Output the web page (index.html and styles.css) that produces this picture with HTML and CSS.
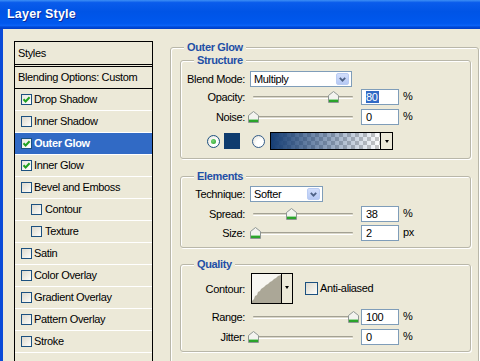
FILE: index.html
```html
<!DOCTYPE html>
<html>
<head>
<meta charset="utf-8">
<title>Layer Style</title>
<link rel="stylesheet" href="styles.css">
</head>
<body>
<div class="window">
  <div class="titlebar"><span class="title">Layer Style</span></div>
  <div class="frame">
    <div class="stylelist">
      <div class="list-head">Styles</div>
      <div class="list-blend">Blending Options: Custom</div>
      <div class="item"><span class="cb on"><svg width="9" height="9" viewBox="0 0 9 9"><path d="M1.5 4.3 L3.6 6.5 L7.6 2.2" fill="none" stroke="#21A121" stroke-width="2"/></svg></span><span class="txt">Drop Shadow</span></div>
      <div class="item"><span class="cb"></span><span class="txt">Inner Shadow</span></div>
      <div class="item selected"><span class="cb on"><svg width="9" height="9" viewBox="0 0 9 9"><path d="M1.5 4.3 L3.6 6.5 L7.6 2.2" fill="none" stroke="#21A121" stroke-width="2"/></svg></span><span class="txt">Outer Glow</span></div>
      <div class="item"><span class="cb on"><svg width="9" height="9" viewBox="0 0 9 9"><path d="M1.5 4.3 L3.6 6.5 L7.6 2.2" fill="none" stroke="#21A121" stroke-width="2"/></svg></span><span class="txt">Inner Glow</span></div>
      <div class="item"><span class="cb"></span><span class="txt">Bevel and Emboss</span></div>
      <div class="item sub"><span class="cb"></span><span class="txt">Contour</span></div>
      <div class="item sub"><span class="cb"></span><span class="txt">Texture</span></div>
      <div class="item"><span class="cb"></span><span class="txt">Satin</span></div>
      <div class="item"><span class="cb"></span><span class="txt">Color Overlay</span></div>
      <div class="item"><span class="cb"></span><span class="txt">Gradient Overlay</span></div>
      <div class="item"><span class="cb"></span><span class="txt">Pattern Overlay</span></div>
      <div class="item"><span class="cb"></span><span class="txt">Stroke</span></div>
    </div>

    <fieldset class="group outer">
      <legend>Outer Glow</legend>
      <div class="outer-body">

        <fieldset class="group structure">
          <legend>Structure</legend>
          <div class="rows">
            <div class="row r-blend">
              <span class="lbl">Blend Mode:</span>
              <span class="select blend"><span>Multiply</span><span class="drop"><svg width="7" height="5" viewBox="0 0 7 5"><path d="M0.8 0.8 L3.5 3.6 L6.2 0.8" fill="none" stroke="#4D6185" stroke-width="1.8"/></svg></span></span>
            </div>
            <div class="row r-opacity">
              <span class="lbl">Opacity:</span>
              <span class="slider"><span class="track"></span><span class="thumb" style="left:78px"><svg width="11" height="12" viewBox="0 0 11 12"><path d="M0.5 4.5 L5.5 0.5 L10.5 4.5 V11.5 H0.5 Z" fill="#F3F3EF" stroke="#8E9693"/><rect x="1" y="9" width="9" height="2" fill="#2BA42B"/><rect x="1" y="8" width="9" height="1" fill="#9ED79E"/></svg></span></span>
              <span class="num"><span class="sel">80</span></span><span class="unit">%</span>
            </div>
            <div class="row r-noise">
              <span class="lbl">Noise:</span>
              <span class="slider"><span class="track"></span><span class="thumb" style="left:-2px"><svg width="11" height="12" viewBox="0 0 11 12"><path d="M0.5 4.5 L5.5 0.5 L10.5 4.5 V11.5 H0.5 Z" fill="#F3F3EF" stroke="#8E9693"/><rect x="1" y="9" width="9" height="2" fill="#2BA42B"/><rect x="1" y="8" width="9" height="1" fill="#9ED79E"/></svg></span></span>
              <span class="num">0</span><span class="unit">%</span>
            </div>
            <div class="row r-color">
              <span class="radio on"><span class="dot"></span></span>
              <span class="swatch"></span>
              <span class="radio off"></span>
              <span class="gradient"><span class="grad-fill"></span><span class="grad-drop"><span class="tri"></span></span></span>
            </div>
          </div>
        </fieldset>

        <fieldset class="group elements">
          <legend>Elements</legend>
          <div class="rows">
            <div class="row r-tech">
              <span class="lbl">Technique:</span>
              <span class="select tech"><span>Softer</span><span class="drop"><svg width="7" height="5" viewBox="0 0 7 5"><path d="M0.8 0.8 L3.5 3.6 L6.2 0.8" fill="none" stroke="#4D6185" stroke-width="1.8"/></svg></span></span>
            </div>
            <div class="row r-spread">
              <span class="lbl">Spread:</span>
              <span class="slider"><span class="track"></span><span class="thumb" style="left:36px"><svg width="11" height="12" viewBox="0 0 11 12"><path d="M0.5 4.5 L5.5 0.5 L10.5 4.5 V11.5 H0.5 Z" fill="#F3F3EF" stroke="#8E9693"/><rect x="1" y="9" width="9" height="2" fill="#2BA42B"/><rect x="1" y="8" width="9" height="1" fill="#9ED79E"/></svg></span></span>
              <span class="num">38</span><span class="unit">%</span>
            </div>
            <div class="row r-size">
              <span class="lbl">Size:</span>
              <span class="slider"><span class="track"></span><span class="thumb" style="left:0px"><svg width="11" height="12" viewBox="0 0 11 12"><path d="M0.5 4.5 L5.5 0.5 L10.5 4.5 V11.5 H0.5 Z" fill="#F3F3EF" stroke="#8E9693"/><rect x="1" y="9" width="9" height="2" fill="#2BA42B"/><rect x="1" y="8" width="9" height="1" fill="#9ED79E"/></svg></span></span>
              <span class="num">2</span><span class="unit">px</span>
            </div>
          </div>
        </fieldset>

        <fieldset class="group quality">
          <legend>Quality</legend>
          <div class="rows">
            <div class="row r-contour">
              <span class="lbl">Contour:</span>
              <span class="contour">
                <span class="preview"><svg width="29" height="29" viewBox="0 0 29 29"><path d="M0 29 L0 27 L2 25 L3 22 L5 21 L6 18 L8 17 L9 15 L12 13 L14 11 L16 10 L18 8 L20 7 L22 5 L24 4 L26 2 L29 1 L29 29 Z" fill="#ABA797"/></svg></span>
                <span class="cdrop"><span class="tri"></span></span>
              </span>
              <span class="aa"><span class="cb big"></span><span class="txt">Anti-aliased</span></span>
            </div>
            <div class="row r-range">
              <span class="lbl">Range:</span>
              <span class="slider"><span class="track"></span><span class="thumb" style="left:98px"><svg width="11" height="12" viewBox="0 0 11 12"><path d="M0.5 4.5 L5.5 0.5 L10.5 4.5 V11.5 H0.5 Z" fill="#F3F3EF" stroke="#8E9693"/><rect x="1" y="9" width="9" height="2" fill="#2BA42B"/><rect x="1" y="8" width="9" height="1" fill="#9ED79E"/></svg></span></span>
              <span class="num">100</span><span class="unit">%</span>
            </div>
            <div class="row r-jitter">
              <span class="lbl">Jitter:</span>
              <span class="slider"><span class="track"></span><span class="thumb" style="left:-2px"><svg width="11" height="12" viewBox="0 0 11 12"><path d="M0.5 4.5 L5.5 0.5 L10.5 4.5 V11.5 H0.5 Z" fill="#F3F3EF" stroke="#8E9693"/><rect x="1" y="9" width="9" height="2" fill="#2BA42B"/><rect x="1" y="8" width="9" height="1" fill="#9ED79E"/></svg></span></span>
              <span class="num">0</span><span class="unit">%</span>
            </div>
          </div>
        </fieldset>

      </div>
    </fieldset>
  </div>
</div>
</body>
</html>
```

FILE: styles.css
```css
* { box-sizing: border-box; }
html, body { margin: 0; padding: 0; }
body {
  width: 480px;
  height: 361px;
  overflow: hidden;
  background: #ECE9D8;
  font-family: "Liberation Sans", Arial, sans-serif;
  font-size: 11px;
  letter-spacing: -0.35px;
  color: #000;
}
.window { height: 361px; display: flex; flex-direction: column; }

.titlebar {
  height: 29px;
  flex: none;
  display: flex;
  align-items: center;
  padding: 0 0 1px 7px;
  background: linear-gradient(180deg, #3d8ff5 0, #0a5ceb 9%, #0054e6 40%, #0058ee 80%, #0a62f6 88%, #004ad8 93%, #003dc8 100%);
}
.title {
  color: #fff;
  font-weight: bold;
  font-size: 12.5px;
  letter-spacing: 0.2px;
  text-shadow: 1px 1px 0 #0a2a9a;
}

.frame {
  flex: 1;
  min-height: 0;
  display: flex;
  align-items: flex-start;
  border-left: 3px solid #0a4ad8;
  padding: 12px 0 0 11px;
}

/* left style list */
.stylelist {
  width: 139px;
  height: 330px;
  flex: none;
  border: 1px solid #000;
  border-bottom: none;
}
.list-head {
  height: 23px;
  padding-left: 3px;
  line-height: 22px;
  border-bottom: 1px solid #000;
}
.list-blend {
  margin-top: 1px;
  height: 23px;
  padding-left: 3px;
  line-height: 21px;
  border-top: 1px solid #000;
  border-bottom: 1px solid #000;
}
.item {
  height: 22px;
  display: flex;
  align-items: center;
  padding: 0 0 1px 6px;
  border-bottom: 1px solid #fff;
}
.item.sub { padding-left: 16px; }
.item .txt { margin-left: 2px; }
.item.sub .txt { margin-left: 3px; }
.item.selected { background: #316AC5; color: #fff; font-weight: bold; }

.cb {
  width: 11px;
  height: 11px;
  flex: none;
  border: 1px solid #1C5180;
  background: linear-gradient(135deg, #DCD9CF 0%, #EDEBE3 50%, #fdfdfb 100%);
  display: flex;
  align-items: center;
  justify-content: center;
}
.cb.on { background: linear-gradient(135deg, #E8E7E0, #fff); }
.cb.big { width: 13px; height: 13px; }

/* group boxes (etched) */
.group {
  margin: 0;
  padding: 0;
  min-inline-size: 0;
  border: 1px solid #B9B7A9;
  border-radius: 3px;
  box-shadow: 1px 1px 0 #fff, inset 1px 1px 0 #fff;
}
.group > legend {
  margin-left: 13px;
  padding: 0 3px;
  line-height: 13px;
  font-weight: bold;
  color: #1F4FA6;
  background: #ECE9D8;
}
.outer {
  margin-left: 17px;
  width: 309px;
  height: 330px;
  flex: none;
}
.outer-body { padding: 0 7px 0 9px; }
.elements { margin-top: 11px; }
.quality { margin-top: 10px; }

.structure .rows { padding-bottom: 8px; }
.elements .rows { padding-bottom: 6px; }
.quality .rows { padding-bottom: 6px; }

.row {
  display: flex;
  align-items: center;
  height: 16px;
}
.lbl {
  width: 64px;
  flex: none;
  margin-right: 5px;
  text-align: right;
}
.r-blend { margin-top: 4px; }
.r-opacity { margin-top: 2px; }
.r-noise { margin-top: 4px; }
.r-color { margin-top: 7px; height: 18px; padding-left: 26px; }
.r-tech { margin-top: 3px; }
.r-spread { margin-top: 4px; }
.r-size { margin-top: 3px; }
.r-contour { margin-top: 2px; height: 31px; }
.r-range { margin-top: 5px; }
.r-jitter { margin-top: 4px; }

/* combo boxes */
.select {
  height: 16px;
  flex: none;
  display: flex;
  align-items: center;
  justify-content: space-between;
  padding: 0 2px 0 3px;
  border: 1px solid #7F9DB9;
  background: #fff;
}
.select.blend { width: 102px; }
.select.tech { width: 73px; }
.drop {
  width: 13px;
  height: 12px;
  display: flex;
  align-items: center;
  justify-content: center;
  border: 1px solid #BACCF3;
  border-radius: 2px;
  background: linear-gradient(#D2DEFB, #B6C9F4);
}

/* sliders */
.slider {
  position: relative;
  width: 106px;
  height: 16px;
  flex: none;
  padding: 7px 3px 0;
}
.track {
  display: block;
  height: 3px;
  border-top: 1px solid #A3A193;
  border-bottom: 1px solid #fff;
  background: #DAD7C9;
  border-radius: 1px;
}
.thumb {
  position: absolute;
  top: 2px;
  width: 11px;
  height: 12px;
  display: block;
}
.thumb svg { display: block; }

.num {
  width: 38px;
  height: 16px;
  flex: none;
  margin-left: 5px;
  padding-left: 4px;
  display: flex;
  align-items: center;
  border: 1px solid #7F9DB9;
  background: #fff;
}
.sel { background: #316AC5; color: #fff; line-height: 12px; padding: 0 1px 0 0; }
.unit { margin-left: 4px; margin-top: -2px; }

/* colour row */
.radio {
  width: 13px;
  height: 13px;
  flex: none;
  border-radius: 50%;
  border: 1px solid #1C5180;
  background: radial-gradient(circle at 65% 65%, #fff 0, #fff 35%, #E4E2D9 90%);
  display: flex;
  align-items: center;
  justify-content: center;
}
.radio.off { margin-left: 12px; border-color: #335C8A; }
.dot {
  width: 5px;
  height: 5px;
  border-radius: 50%;
  background: radial-gradient(circle at 40% 40%, #7AD67A, #21A121);
}
.swatch {
  width: 16px;
  height: 16px;
  flex: none;
  margin-left: 4px;
  background: #0F3C6E;
}
.gradient {
  width: 123px;
  height: 18px;
  flex: none;
  margin-left: 5px;
  display: flex;
  border: 1px solid #000;
}
.grad-fill {
  flex: 1;
  background:
    linear-gradient(to right, #163E74 0%, rgba(22, 62, 116, 0.75) 25%, rgba(22, 62, 116, 0) 100%),
    repeating-conic-gradient(#C8C8C8 0 25%, #fff 0 50%) 0 0 / 8px 8px;
}
.grad-drop {
  width: 12px;
  flex: none;
  border-left: 1px solid #000;
  background: #ECE9D8;
  display: flex;
  align-items: center;
  justify-content: center;
}
.tri {
  width: 0;
  height: 0;
  border-left: 2.5px solid transparent;
  border-right: 2.5px solid transparent;
  border-top: 3px solid #000;
}

/* contour */
.contour {
  margin-left: 1px;
  width: 42px;
  height: 31px;
  flex: none;
  display: flex;
  border: 1px solid #000;
}
.preview {
  width: 30px;
  flex: none;
  border-right: 1px solid #000;
  background: #F7F6F1;
  display: flex;
  align-items: flex-end;
}
.preview svg { display: block; }
.cdrop {
  flex: 1;
  background: #ECE9D8;
  display: flex;
  align-items: center;
  justify-content: center;
  padding-bottom: 2px;
}
.aa { display: flex; align-items: center; margin-left: 12px; margin-top: -1px; }
.aa .txt { margin-left: 2px; }
```
